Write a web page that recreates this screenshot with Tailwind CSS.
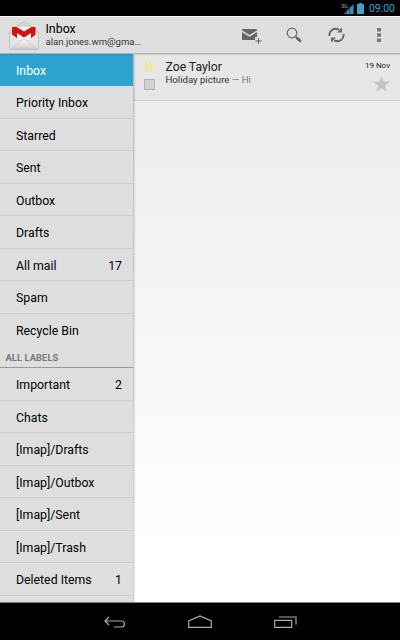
<!DOCTYPE html>
<html lang="en">
<head>
  <meta charset="UTF-8" />
  <meta name="viewport" content="width=device-width, initial-scale=1.0"/>
  <title>Inbox</title>
  <script src="https://cdn.jsdelivr.net/npm/@tailwindcss/browser@4"></script>
</head>

<body class="bg-black font-['Roboto',sans-serif]">
  <div class="flex flex-col w-[400px] h-[640px] overflow-hidden">

    <!-- Status bar -->
    <div class="flex items-center justify-end h-4 shrink-0 bg-black pr-1 text-[#33a5d0]">
      <svg class="w-[13px] h-[12px]" viewBox="0 0 13 12">
        <text x="0" y="5.500" font-size="5.500" fill="#aaa">3G</text>
        <path d="M12.500 2v10H3z" fill="#2f93ba"/>
        <path d="M5.500 7v5M8.500 4v8" stroke="#12485c" stroke-width=".6"/>
      </svg>
      <svg class="w-[7px] h-[11px] ml-[3px]" viewBox="0 0 7 11"><path d="M2 0h3v1h2v10H0V1h2z" fill="#3aa3cb"/></svg>
      <span class="ml-[5px] w-[27px] pt-0.5 text-[10.400px] leading-4 whitespace-nowrap">09:00</span>
    </div>

    <!-- Action bar -->
    <header class="flex items-center h-[38px] shrink-0 bg-[#dedede] border-t border-b border-t-[#f5f5f5] border-b-[#b0b0b0] z-10 shadow-[0_1px_1px_#00000018]">
      <svg class="w-[31px] h-[32px] ml-2" viewBox="0 0 31 32">
        <defs>
          <linearGradient id="env" x1="0" y1="0" x2="0" y2="1"><stop stop-color="#f4f4f4"/><stop offset="1" stop-color="#cfcfcf"/></linearGradient>
        </defs>
        <path d="M1.500 13L13 4q3-2.500 6 0l11.500 9v16.500q0 1-1 1h-27q-1 0-1-1z" fill="#d6d6d6" stroke="#bcbcbc" stroke-width=".8"/>
        <path d="M4 8h23.500v13H4z" fill="#f2f2f2"/>
        <path d="M4 8h4.500l7.500 4.500L23.500 8h4v8l-4.500 4v-6L16 18.500 9 14v6l-5-4z" fill="#d01212"/>
        <path d="M2 14l11 8-11 8zM30 14l-11 8 11 8z" fill="#e6e6e6"/>
        <path d="M2 30l12-9q2-1.200 4 0l12 9z" fill="url(#env)" stroke="#c2c2c2" stroke-width=".6"/>
      </svg>
      <div class="ml-[6.500px] flex-1">
        <h1 class="text-[12.400px] leading-[13px] text-black">Inbox</h1>
        <p class="text-[9.550px] leading-[13px] text-[#333] whitespace-nowrap">alan.jones.wm@gma…</p>
      </div>
      <nav class="flex items-center text-[#666] mr-[19px]">
        <svg class="w-5 h-4 mt-0.5" viewBox="0 0 20 16">
          <path d="M0 2.300V1h15v1.300L7.500 7zM0 4l7.500 4.700L15 4v5h-2v3H0z" fill="currentColor"/>
          <path d="M16.500 10v6M13.500 13h6" stroke="currentColor"/>
        </svg>
        <svg class="w-4 h-4 ml-6" viewBox="0 0 16 16" fill="none" stroke="currentColor">
          <circle cx="6" cy="6" r="4.800" stroke-width="1.200"/>
          <path d="M9.500 9.500l2 2" stroke-width="1.500"/>
          <path d="M11 11l3 2.700" stroke-width="2.800" stroke-linecap="round"/>
        </svg>
        <svg class="w-[17px] h-4 ml-[26px]" viewBox="0 0 17 16">
          <path d="M1.500 9C.8 4 5.500 0 11 2.700M15.500 7C16.200 12 11.500 16 6 13.300" fill="none" stroke="currentColor" stroke-width="1.900"/>
          <path d="M14 .5v5H9zM3 15.500v-5h5z" fill="currentColor"/>
        </svg>
        <svg class="w-1 h-[14px] ml-[32px]" viewBox="0 0 4 14"><path d="M0 0h4v3.500H0zM0 5.200h4v3.500H0zM0 10.400h4v3.500H0z" fill="#777"/></svg>
      </nav>
    </header>

    <!-- Labels and message list -->
    <main class="flex flex-1 min-h-0 bg-linear-to-b from-[#ebebeb] to-white to-90% border-b border-[#888]">
      <aside class="relative w-[133px] shrink-0 overflow-hidden bg-[#dedede] text-[12.300px] text-black shadow-[1px_0_2px_#00000044]">
        <ul>
          <li class="flex items-center h-[32px] pl-4 pt-0.5 bg-[#2da3d1] text-white">Inbox</li>
          <li class="flex items-center h-[32.500px] pl-4 pt-[3px] border-b border-[#cdcdcd]">Priority Inbox</li>
          <li class="flex items-center h-[32.500px] pl-4 pt-[3px] border-b border-[#cdcdcd]">Starred</li>
          <li class="flex items-center h-[32.500px] pl-4 pt-[3px] border-b border-[#cdcdcd]">Sent</li>
          <li class="flex items-center h-[32.500px] pl-4 pt-[3px] border-b border-[#cdcdcd]">Outbox</li>
          <li class="flex items-center h-[32.500px] pl-4 pt-[3px] border-b border-[#cdcdcd]">Drafts</li>
          <li class="flex items-center justify-between h-[32.500px] pl-4 pr-[11px] pt-[3px] border-b border-[#cdcdcd]">All mail <span>17</span></li>
          <li class="flex items-center h-[32.500px] pl-4 pt-[3px] border-b border-[#cdcdcd]">Spam</li>
          <li class="flex items-center h-[32.500px] pl-4 pt-0.5">Recycle Bin</li>
        </ul>
        <h2 class="h-[22px] pl-[5.500px] text-[9.300px] leading-[24px] font-bold tracking-[0.1px] text-[#777] border-b border-[#999]">ALL LABELS</h2>
        <ul>
          <li class="flex items-center justify-between h-[32.500px] pl-4 pr-[11px] pt-[3px] border-b border-[#cdcdcd]">Important <span>2</span></li>
          <li class="flex items-center h-[32.500px] pl-4 pt-[3px] border-b border-[#cdcdcd]">Chats</li>
          <li class="flex items-center h-[32.500px] pl-4 pt-[3px] border-b border-[#cdcdcd]">[Imap]/Drafts</li>
          <li class="flex items-center h-[32.500px] pl-4 pt-[3px] border-b border-[#cdcdcd]">[Imap]/Outbox</li>
          <li class="flex items-center h-[32.500px] pl-4 pt-[3px] border-b border-[#cdcdcd]">[Imap]/Sent</li>
          <li class="flex items-center h-[32.500px] pl-4 pt-[3px] border-b border-[#cdcdcd]">[Imap]/Trash</li>
          <li class="flex items-center justify-between h-[32.500px] pl-4 pr-[11px] pt-[3px] border-b border-[#cdcdcd]">Deleted Items <span>1</span></li>
        </ul>
      </aside>

      <section class="flex-1">
        <article class="flex h-[46.500px] bg-[#e6e6e6] border-b border-[#cfcfcf]">
          <div class="w-[32.500px] pl-[11px] pt-[8px]">
            <svg class="w-[10px] h-[10px]" viewBox="0 0 10 10" fill="none" stroke="#f3e871" stroke-width="1.900"><path d="M1 .5L4 5 1 9.500M5.500.5l3 4.500-3 4.500"/></svg>
            <div class="w-[11px] h-[11px] mt-[7px] bg-[#d2d2d2] border border-[#b2b2b2]"></div>
          </div>
          <div class="flex-1 pt-[6px]">
            <h3 class="text-[12.200px] leading-[14px] text-[#222]">Zoe Taylor</h3>
            <p class="text-[9.600px] leading-[12px] text-[#333] whitespace-nowrap">Holiday picture <span class="text-[#777]">— Hi</span></p>
          </div>
          <div class="flex flex-col items-end pr-[10px] pt-[5px]">
            <time class="text-[8px] leading-[13px] text-[#222]">19 Nov</time>
            <svg class="w-[17px] h-[16px] mt-[4px]" viewBox="0 0 17 16"><path d="M8.500 0l2.100 5.700 6.400.1-5.100 3.900 1.900 6.300-5.300-3.700L3.200 16l1.900-6.300L0 5.800l6.400-.1z" fill="#c4c4c4"/></svg>
          </div>
        </article>
      </section>
    </main>

    <!-- Navigation bar -->
    <footer class="flex items-center h-[37px] shrink-0 bg-black pl-[104px]">
      <svg class="w-[22px] h-[12px]" viewBox="0 0 22 12" fill="none" stroke="#aaa" stroke-width="1.200">
        <path d="M5 1L1 5l4 4M1 5h16.500a3 3 0 0 1 0 6H10"/>
      </svg>
      <svg class="w-[24px] h-[13px] ml-[62px]" viewBox="0 0 24 13" fill="none" stroke="#aaa" stroke-width="1.200">
        <path d="M.7 12.300V6L12 1l11.300 5v6.300z"/>
      </svg>
      <svg class="w-[23px] h-[12px] ml-[62px]" viewBox="0 0 23 12" fill="none" stroke="#aaa" stroke-width="1.200">
        <path d="M.7 4.300h17v7H.7zM5 1h17v7.500"/>
      </svg>
    </footer>
  </div>
</body>
</html>
